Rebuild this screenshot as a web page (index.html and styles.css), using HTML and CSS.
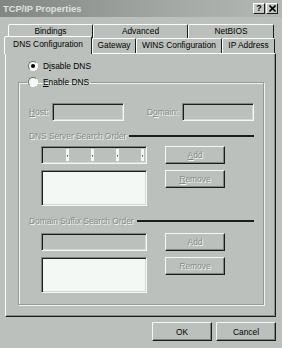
FILE: index.html
```html
<!DOCTYPE html>
<html lang="en">
<head>
    <meta charset="UTF-8">
    <title>TCP/IP Properties</title>
    <link rel="stylesheet" href="styles.css">
</head>
<body>
    <div class="window">
        <div class="titlebar">
            <span class="title">TCP/IP Properties</span>
            <span class="caption-buttons">
                <span class="caption-btn help">?</span>
                <span class="caption-btn">
                    <svg width="7" height="7" viewBox="0 0 7 7"><path d="M0.5 0.5 L6.5 6.5 M6.5 0.5 L0.5 6.5" stroke="#000" stroke-width="1.6"/></svg>
                </span>
            </span>
        </div>

        <div class="tabs">
            <div class="tab-row back">
                <div class="tab t-bindings">Bindings</div>
                <div class="tab t-advanced">Advanced</div>
                <div class="tab t-netbios">NetBIOS</div>
            </div>
            <div class="tab-row front">
                <div class="tab active t-dns">DNS Configuration</div>
                <div class="tab t-gateway">Gateway</div>
                <div class="tab t-wins">WINS Configuration</div>
                <div class="tab t-ip">IP Address</div>
            </div>
        </div>

        <div class="panel">
            <div class="radio-row top-radio"><span class="radio checked"></span><span>D<u>i</u>sable DNS</span></div>

            <fieldset class="group">
                <legend class="group-legend">
                    <span class="radio-row"><span class="radio"></span><span><u>E</u>nable DNS</span></span>
                </legend>
                <div class="group-body">
                    <div class="host-row">
                        <span class="disabled-text host-label"><u>H</u>ost:</span>
                        <span class="field small-field"></span>
                        <span class="disabled-text domain-label">D<u>o</u>main:</span>
                        <span class="field small-field"></span>
                    </div>

                    <div class="section-label disabled-text">DNS Server Search Order</div>
                    <div class="order-block">
                        <div class="order-left">
                            <div class="field ip-field">
                                <span class="ip-part"></span>
                                <span class="ip-part"></span>
                                <span class="ip-part"></span>
                                <span class="ip-part"></span>
                            </div>
                            <div class="listbox"></div>
                        </div>
                        <div class="order-right">
                            <button class="btn" disabled><u>A</u>dd</button>
                            <button class="btn" disabled><u>R</u>emove</button>
                        </div>
                    </div>

                    <div class="section-label disabled-text">Domain Suffix Search Order</div>
                    <div class="order-block suffix">
                        <div class="order-left">
                            <div class="field wide-field"></div>
                            <div class="listbox"></div>
                        </div>
                        <div class="order-right">
                            <button class="btn" disabled>Add</button>
                            <button class="btn" disabled>Remove</button>
                        </div>
                    </div>
                </div>
            </fieldset>
        </div>

        <div class="footer">
            <button class="btn footer-btn">OK</button>
            <button class="btn footer-btn">Cancel</button>
        </div>
    </div>
</body>
</html>
```

FILE: styles.css
```css
body {
    margin: 0;
    padding: 0;
    background: #bcc0bc;
}

.window {
    width: 282px;
    height: 348px;
    background: #bcc0bc;
    font-family: "Liberation Sans", Arial, sans-serif;
    font-size: 8.4px;
    color: #000;
    overflow: hidden;
}

/* title bar */
.titlebar {
    height: 17px;
    display: flex;
    align-items: center;
    justify-content: space-between;
    padding: 0 4px 0 3px;
    background: linear-gradient(to right, #828682, #a4a8a4 60%, #b4b8b4);
}

.title {
    color: #dde1dd;
    font-weight: bold;
    font-size: 9.3px;
}

.caption-buttons {
    display: flex;
}

.caption-btn {
    width: 12px;
    height: 11px;
    box-sizing: border-box;
    display: flex;
    align-items: center;
    justify-content: center;
    background: #c4c8c4;
    border: 1px solid;
    border-color: #fff #1c1c1c #1c1c1c #fff;
    font-weight: bold;
    font-size: 9px;
    line-height: 9px;
}

.caption-btn.help {
    margin-right: 1px;
}

/* tabs */
.tabs {
    margin-top: 7px;
}

.tab-row {
    display: flex;
}

.tab-row.back {
    height: 14px;
    padding-left: 8px;
}

.tab-row.front {
    height: 15px;
    padding-left: 4px;
}

.tab {
    box-sizing: border-box;
    border: 1px solid;
    border-bottom: none;
    border-color: #fff #1c1c1c transparent #fff;
    border-radius: 2px 2px 0 0;
    text-align: center;
    line-height: 12px;
    background: #bcc0bc;
    white-space: nowrap;
}

.back .tab {
    height: 14px;
}

.front .tab {
    height: 15px;
    line-height: 13px;
}

.t-bindings { width: 85px; }
.t-advanced { width: 95px; }
.t-netbios { width: 86px; }
.t-dns { width: 88px; }
.t-gateway { width: 44px; }
.t-wins { width: 86px; }
.t-ip { width: 53px; }

.front .tab.active {
    position: relative;
    z-index: 1;
    height: 18px;
    margin-top: -2px;
    line-height: 15px;
}

/* panel */
.panel {
    box-sizing: border-box;
    width: 271px;
    height: 264px;
    margin-left: 5px;
    padding: 6px 0 0 0;
    border: 1px solid;
    border-color: #fff #1c1c1c #1c1c1c #fff;
    box-shadow: inset -1px -1px 0 #8a8e8a;
}

.radio-row {
    display: flex;
    align-items: center;
    height: 12px;
    gap: 5px;
}

.top-radio {
    margin-left: 22px;
}

.radio {
    width: 10px;
    height: 10px;
    box-sizing: border-box;
    border-radius: 50%;
    background: #f4f8f4;
    border: 1px solid;
    border-color: #6c706c #fff #fff #6c706c;
    display: flex;
    align-items: center;
    justify-content: center;
}

.radio.checked:after {
    content: "";
    width: 4px;
    height: 4px;
    border-radius: 50%;
    background: #000;
}

.group {
    width: 246px;
    box-sizing: border-box;
    margin: 4px 0 0 12px;
    padding: 0;
    border: 1px solid #969a96;
    box-shadow: 1px 1px 0 #f0f4f0, inset 1px 1px 0 #f0f4f0;
}

.group-legend {
    margin-left: 8px;
    padding: 0 2px 0 1px;
}

.group-body {
    padding: 0 9px 11px 10px;
}

.disabled-text {
    color: #868a86;
    text-shadow: 1px 1px 0 #f4f8f4;
}

.host-row {
    display: flex;
    align-items: center;
    margin-top: 15px;
}

.host-label {
    width: 23px;
}

.domain-label {
    width: 35px;
    margin-left: 23px;
}

.field {
    box-sizing: border-box;
    height: 18px;
    border: 1px solid;
    border-color: #808480 #f4f8f4 #f4f8f4 #808480;
    box-shadow: inset 1px 1px 0 #1c1c1c, inset -1px -1px 0 #d4d8d4;
    background: #bcc0bc;
}

.small-field {
    width: 72px;
}

.section-label {
    display: flex;
    align-items: center;
    height: 12px;
    margin-top: 9px;
    white-space: nowrap;
}

.section-label:after {
    content: "";
    flex: 1;
    height: 2px;
    margin-left: 3px;
    background: #1c1c1c;
    box-shadow: none;
}

.order-block {
    display: flex;
    margin-top: 4px;
    margin-left: 12px;
}

.order-block.suffix {
    margin-top: 6px;
}

.order-left {
    width: 106px;
    display: flex;
    flex-direction: column;
    gap: 6px;
}

.order-right {
    display: flex;
    flex-direction: column;
    gap: 6px;
    margin-left: 18px;
}

.ip-field {
    display: flex;
    padding: 2px 2px 2px 2px;
}

.ip-part {
    flex: 1;
    display: flex;
    justify-content: flex-end;
}

.ip-part:after {
    content: "";
    width: 3px;
    background: #f4f8f4 radial-gradient(circle at 50% 55%, #444 0.8px, transparent 1px);
}

.wide-field {
    width: 106px;
}

.listbox {
    box-sizing: border-box;
    height: 36px;
    background: #f4f8f4;
    border: 1px solid;
    border-color: #808480 #f4f8f4 #f4f8f4 #808480;
    box-shadow: inset 1px 1px 0 #1c1c1c, inset -1px -1px 0 #d4d8d4;
}

.btn {
    box-sizing: border-box;
    width: 60px;
    height: 18px;
    padding: 0;
    background: #bcc0bc;
    border: 1px solid;
    border-color: #f4f8f4 #1c1c1c #1c1c1c #f4f8f4;
    box-shadow: inset -1px -1px 0 #808480;
    font-family: inherit;
    font-size: 8.4px;
    color: #000;
}

.btn:disabled {
    color: #868a86;
    text-shadow: 1px 1px 0 #f4f8f4;
}

/* dialog buttons */
.footer {
    display: flex;
    justify-content: flex-end;
    gap: 4px;
    margin-top: 5px;
    padding-right: 6px;
}

.footer-btn {
    height: 19px;
}
```
